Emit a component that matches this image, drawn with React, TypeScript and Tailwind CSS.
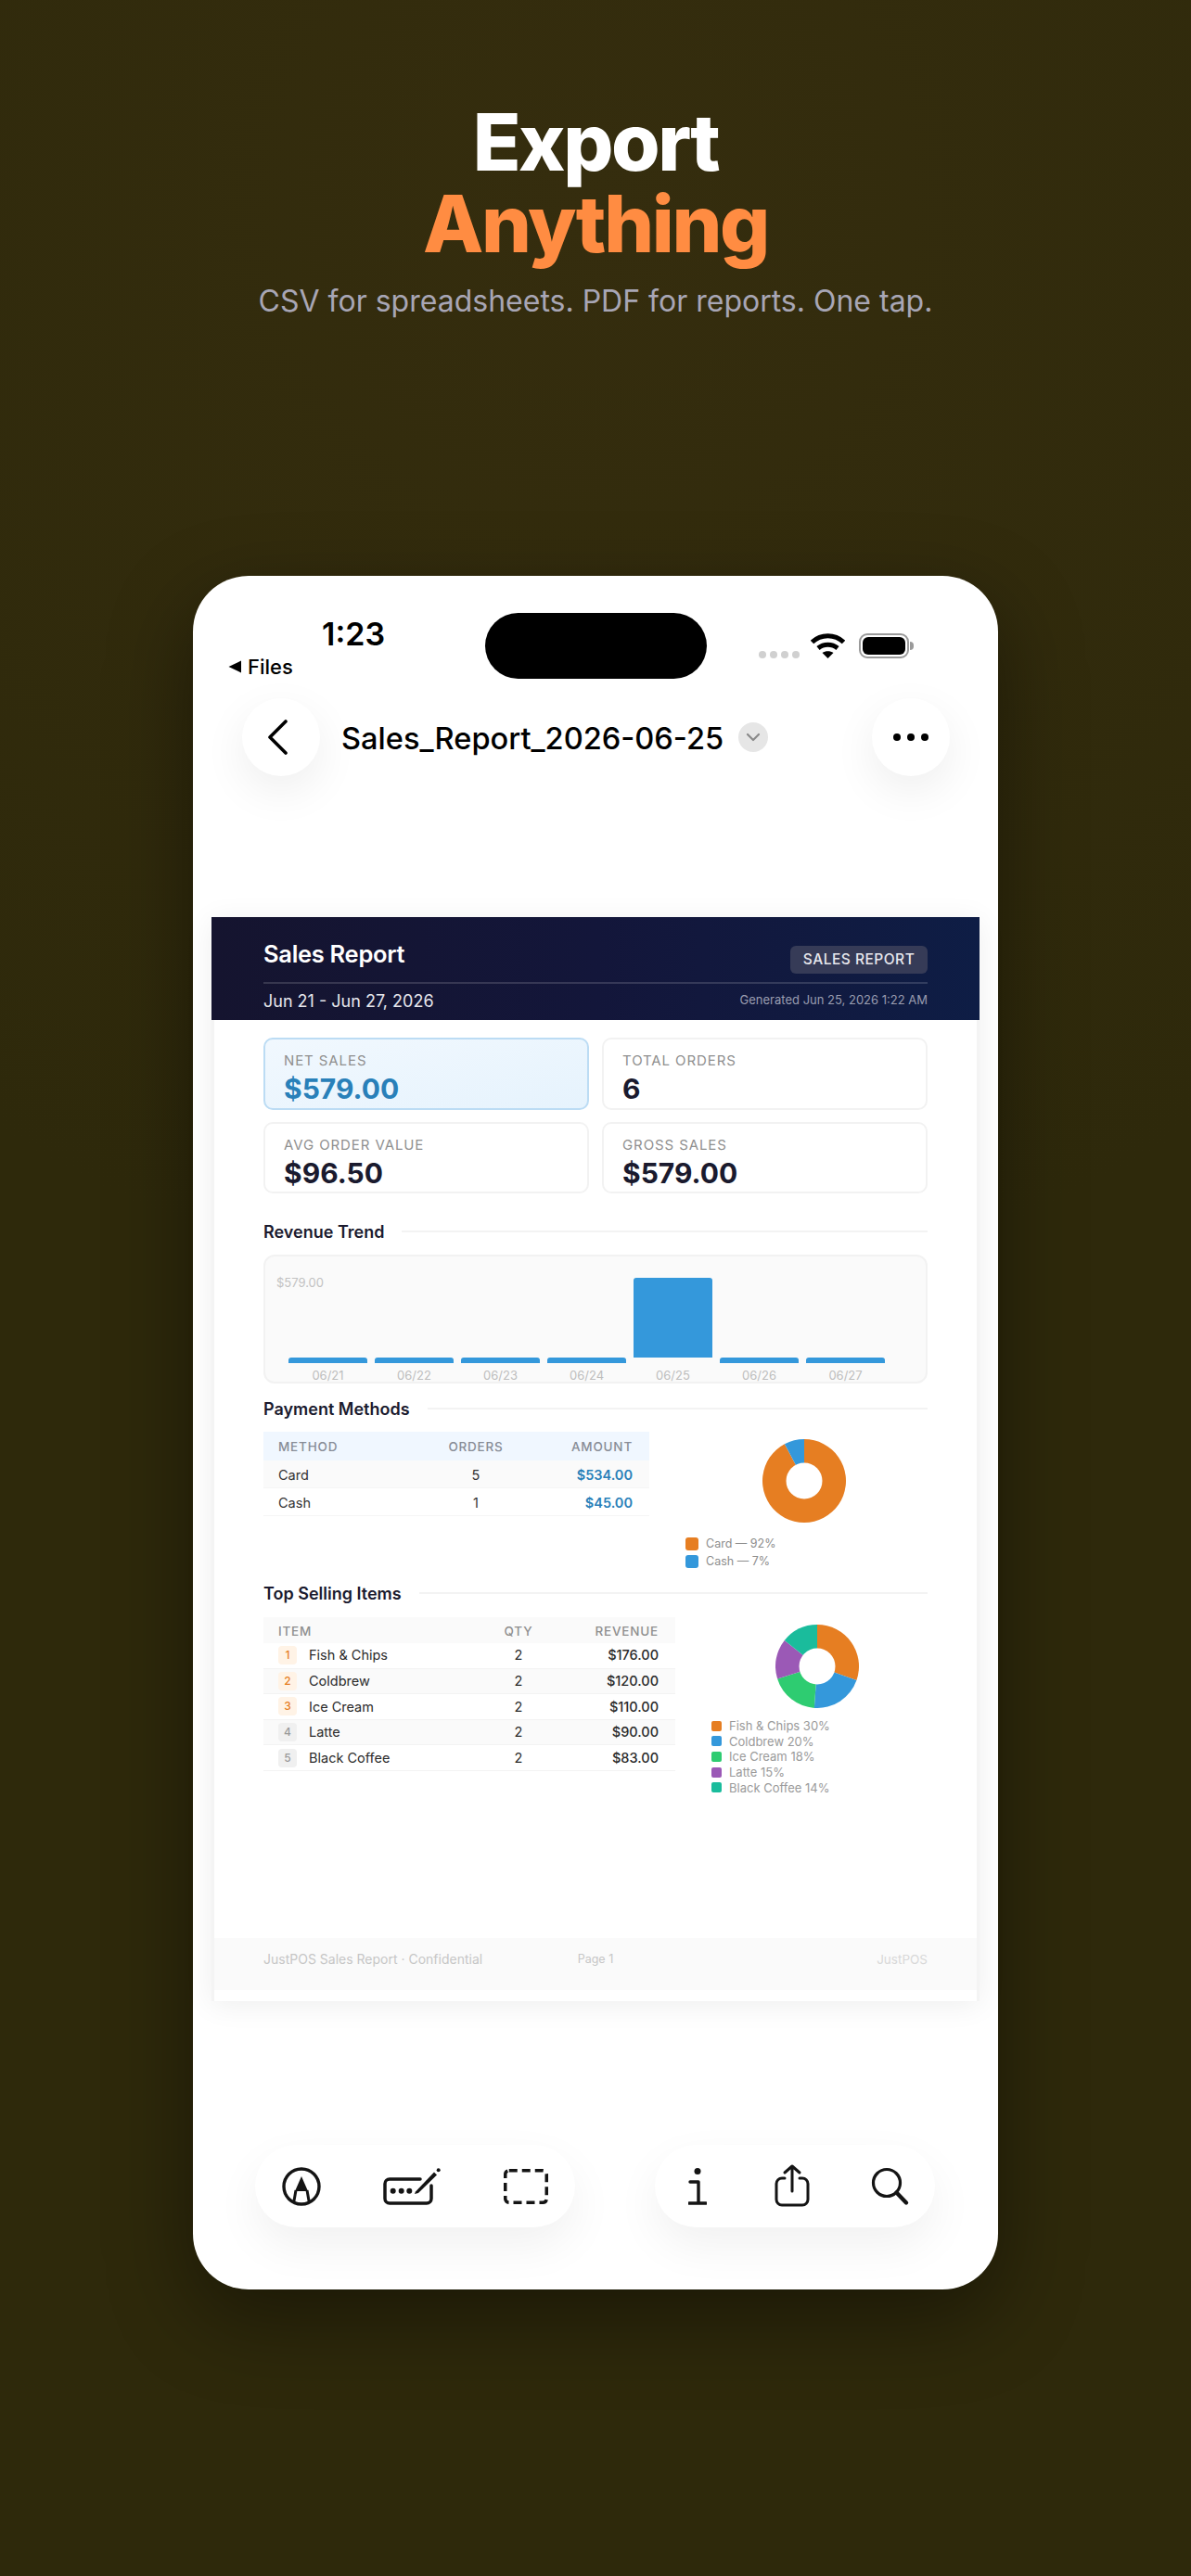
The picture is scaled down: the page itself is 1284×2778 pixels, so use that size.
import React from "react";

const trendDays = ["06/21", "06/22", "06/23", "06/24", "06/25", "06/26", "06/27"];

const paymentRows = [
  { method: "Card", orders: 5, amount: "$534.00" },
  { method: "Cash", orders: 1, amount: "$45.00" },
];

const topItems = [
  { name: "Fish & Chips", revenue: "$176.00" },
  { name: "Coldbrew", revenue: "$120.00" },
  { name: "Ice Cream", revenue: "$110.00" },
  { name: "Latte", revenue: "$90.00" },
  { name: "Black Coffee", revenue: "$83.00" },
];

const itemSlices = [
  { value: 176, color: "#E67E22" },
  { value: 120, color: "#3498DB" },
  { value: 110, color: "#2ECC71" },
  { value: 90, color: "#9B59B6" },
  { value: 83, color: "#1ABC9C" },
];

const paySlices = [
  { value: 534, color: "#E67E22" },
  { value: 45, color: "#3498DB" },
];

const Donut = ({ slices }: { slices: { value: number; color: string }[] }) => {
  const total = slices.reduce((sum, s) => sum + s.value, 0);
  let start = 0;
  return (
    <svg width="90" height="90" viewBox="0 0 90 90">
      {slices.map((s) => {
        const end = start + (s.value / total) * Math.PI * 2;
        const x1 = 45 + 45 * Math.sin(start);
        const y1 = 45 - 45 * Math.cos(start);
        const x2 = 45 + 45 * Math.sin(end);
        const y2 = 45 - 45 * Math.cos(end);
        const large = end - start > Math.PI ? 1 : 0;
        start = end;
        return (
          <path
            key={s.color}
            d={`M45 45 L${x1} ${y1} A45 45 0 ${large} 1 ${x2} ${y2} Z`}
            fill={s.color}
          />
        );
      })}
      <circle cx="45" cy="45" r="19.5" fill="#fff" />
    </svg>
  );
};

const SectionTitle = ({ title, className }: { title: string; className: string }) => (
  <div className={`flex items-center gap-[19px] h-[22px] ${className}`}>
    <h2 className="mt-[2px] text-[18px] leading-[22px] font-semibold text-[#1a1a2e]">{title}</h2>
    <div className="flex-1 h-[2px] bg-[#f3f3f3]" />
  </div>
);

const StatCard = ({ label, value, active }: { label: string; value: string; active?: boolean }) => (
  <div
    className={`rounded-[10px] border-2 pl-[20px] pt-[14px] ${
      active
        ? "border-[#bcdcf4] bg-gradient-to-br from-[#f1f8fe] to-[#e6f3fd]"
        : "border-[#f2f2f2] bg-white"
    }`}
  >
    <div className="text-[15px] leading-[18px] tracking-[0.9px] text-[#8f8f8f]">{label}</div>
    <div
      className={`mt-[2px] text-[30px] leading-[38px] font-bold ${
        active ? "text-[#2980b9]" : "text-[#1a1a2e]"
      }`}
    >
      {value}
    </div>
  </div>
);

export default function App() {
  return (
    <div className="w-[1284px] h-[2778px] overflow-hidden flex flex-col items-center bg-[#2e290b] bg-[radial-gradient(circle_at_50%_8%,#352d0e,#2e290b_45%)] font-['Inter',sans-serif]">
      {/* Headline */}
      <h1 className="mt-[110px] text-center text-[85px] leading-[88px] font-extrabold tracking-[-2.4px]">
        <span className="block text-white">Export</span>
        <span className="block text-[#ff8c42]">Anything</span>
      </h1>
      <p className="mt-[19px] text-[32px] leading-[40px] text-[#a8a6b5]">
        CSV for spreadsheets. PDF for reports. One tap.
      </p>

      {/* Phone */}
      <div className="mt-[276px] w-[868px] h-[1848px] rounded-[60px] bg-white shadow-[0_30px_90px_rgba(0,0,0,0.42)] flex flex-col">
        {/* Status bar */}
        <div className="relative h-[132px] shrink-0">
          <span className="absolute left-[139px] top-[41px] text-[34px] leading-[44px] font-semibold text-black">
            1:23
          </span>
          <div className="absolute left-[38px] top-[85px] flex items-center gap-[7px] text-[22px] leading-[26px] font-medium text-black">
            <svg width="14" height="14" viewBox="0 0 14 14">
              <path d="M14 0.5V13.5L0.5 7Z" fill="#000" />
            </svg>
            Files
          </div>
          <div className="absolute left-[315px] top-[40px] w-[239px] h-[71px] rounded-full bg-black" />
          <div className="absolute left-[610px] top-[81px] flex gap-[4px]">
            <i className="w-[8px] h-[8px] rounded-full bg-[#d0d0d0]" />
            <i className="w-[8px] h-[8px] rounded-full bg-[#d0d0d0]" />
            <i className="w-[8px] h-[8px] rounded-full bg-[#d0d0d0]" />
            <i className="w-[8px] h-[8px] rounded-full bg-[#d0d0d0]" />
          </div>
          <svg className="absolute left-[666px] top-[62px]" width="37" height="27" viewBox="0 0 37 27">
            <path d="M1.5 9.5 C11 0.5 26 0.5 35.5 9.5" fill="none" stroke="#000" strokeWidth="5" />
            <path d="M8 16 C14 11 23 11 29 16" fill="none" stroke="#000" strokeWidth="5" />
            <path d="M12.5 21 C16 18.5 21 18.5 24.5 21 L18.5 27Z" fill="#000" />
          </svg>
          <div className="absolute left-[718px] top-[62px] flex items-center gap-[1px]">
            <div className="w-[54px] h-[27px] rounded-[9px] border-[2.5px] border-[#9a9a9a] p-[2px]">
              <div className="w-full h-full rounded-[6px] bg-black" />
            </div>
            <div className="w-[4px] h-[9px] rounded-r-full bg-[#9a9a9a]" />
          </div>
        </div>

        {/* Nav row */}
        <div className="flex items-center h-[84px] pl-[53px] pr-[52px] shrink-0">
          <div className="w-[84px] h-[84px] rounded-full bg-white shadow-[0_16px_48px_rgba(0,0,0,0.07)] flex items-center justify-center">
            <svg className="-ml-[9px]" width="24" height="38" viewBox="0 0 24 38" fill="none">
              <path d="M21 2 L4 19 L21 36" stroke="#000" strokeWidth="3.6" strokeLinecap="round" strokeLinejoin="round" />
            </svg>
          </div>
          <span className="ml-[23px] mt-[2px] text-[32.6px] leading-[40px] font-medium text-black">
            Sales_Report_2026-06-25
          </span>
          <div className="ml-[16px] w-[32px] h-[32px] rounded-full bg-[#e6e6e6] flex items-center justify-center">
            <svg width="16" height="10" viewBox="0 0 16 10" fill="none">
              <path d="M2 2 L8 8 L14 2" stroke="#8a8a8a" strokeWidth="2.2" strokeLinecap="round" strokeLinejoin="round" />
            </svg>
          </div>
          <div className="ml-auto w-[84px] h-[84px] rounded-full bg-white shadow-[0_16px_48px_rgba(0,0,0,0.07)] flex items-center justify-center gap-[7px]">
            <i className="w-[8px] h-[8px] rounded-full bg-black" />
            <i className="w-[8px] h-[8px] rounded-full bg-black" />
            <i className="w-[8px] h-[8px] rounded-full bg-black" />
          </div>
        </div>

        {/* Report page */}
        <div className="mx-[20px] mt-[152px] h-[1169px] shrink-0 bg-white flex flex-col border-x-[3px] border-[#f4f4f4] shadow-[0_4px_30px_rgba(0,0,0,0.07)]">
          <div className="-mx-[3px] h-[111px] shrink-0 bg-gradient-to-r from-[#15142f] via-[#13163a] to-[#0e1d45] px-[56px] pt-[31px]">
            <div className="flex justify-between items-start h-[41px] border-b-2 border-white/15">
              <span className="-mt-[7px] text-[25.5px] leading-[32px] font-semibold text-white tracking-[-0.3px]">Sales Report</span>
              <span className="h-[30px] w-[148px] rounded-[6px] bg-[#363b57] text-center text-[15.5px] leading-[30px] font-medium tracking-[0.5px] text-[#e8e8ee]">
                SALES REPORT
              </span>
            </div>
            <div className="flex justify-between items-center h-[36px]">
              <span className="text-[18px] text-[#e6e6ec]">Jun 21 - Jun 27, 2026</span>
              <span className="text-[13px] text-[#9a9db0]">Generated Jun 25, 2026 1:22 AM</span>
            </div>
          </div>

          <div className="flex-1 px-[53px] flex flex-col">
            <div className="mt-[19px] grid grid-cols-2 grid-rows-[78px_77px] gap-x-[14px] gap-y-[13px]">
              <StatCard label="NET SALES" value="$579.00" active />
              <StatCard label="TOTAL ORDERS" value="6" />
              <StatCard label="AVG ORDER VALUE" value="$96.50" />
              <StatCard label="GROSS SALES" value="$579.00" />
            </div>

            <SectionTitle title="Revenue Trend" className="mt-[30px]" />
            <div className="relative mt-[14px] h-[139px] rounded-[12px] border-2 border-[#f2f2f2] bg-[#fafafa] pl-[25px] pt-[23px]">
              <span className="absolute left-[12px] top-[20px] text-[13px] leading-[16px] text-[#c2c2c2]">$579.00</span>
              <div className="flex gap-[8px]">
                {trendDays.map((day, i) => (
                  <div key={day} className="w-[85px] flex flex-col items-center">
                    <div className="h-[92px] w-full flex flex-col justify-end">
                      {i === 4 ? (
                        <div className="h-[86px] mb-[6px] rounded-t-[3px] bg-[#3498db]" />
                      ) : (
                        <div className="h-[6px] rounded-t-[3px] bg-[#3498db]" />
                      )}
                    </div>
                    <span className="mt-[5px] text-[13px] leading-[16px] text-[#bdbdbd]">{day}</span>
                  </div>
                ))}
              </div>
            </div>

            <SectionTitle title="Payment Methods" className="mt-[16px]" />
            <div className="mt-[14px] h-[163px] flex gap-[34px]">
              <div className="w-[416px] shrink-0">
                <div className="grid grid-cols-[176px_74px_1fr] items-center h-[31px] bg-[#f0f7ff] pl-[16px] pr-[18px] pt-[2px] text-[13.5px] font-medium tracking-[0.8px] text-[#878c96]">
                  <span>METHOD</span>
                  <span className="text-center">ORDERS</span>
                  <span className="text-right">AMOUNT</span>
                </div>
                {paymentRows.map((row, i) => (
                  <div
                    key={row.method}
                    className={`grid grid-cols-[176px_74px_1fr] items-center h-[30px] pl-[16px] pr-[18px] pt-[2px] text-[14.5px] text-[#333] border-b border-[#f5f5f5] ${
                      i === 0 ? "bg-[#fafafa]" : "bg-white"
                    }`}
                  >
                    <span>{row.method}</span>
                    <span className="text-center">{row.orders}</span>
                    <span className="text-right font-semibold text-[#2980b9]">{row.amount}</span>
                  </div>
                ))}
              </div>
              <div className="flex-1 flex flex-col items-center pt-[8px]">
                <Donut slices={paySlices} />
                <div className="self-start ml-[5px] mt-[16px] flex flex-col gap-[5px]">
                  <div className="flex items-center gap-[8px] h-[14px] text-[12.5px] text-[#8c8c8c]">
                    <i className="w-[14px] h-[14px] rounded-[3px] bg-[#e67e22]" />
                    Card — 92%
                  </div>
                  <div className="flex items-center gap-[8px] h-[14px] text-[12.5px] text-[#8c8c8c]">
                    <i className="w-[14px] h-[14px] rounded-[3px] bg-[#3498db]" />
                    Cash — 7%
                  </div>
                </div>
              </div>
            </div>

            <SectionTitle title="Top Selling Items" className="" />
            <div className="mt-[15px] flex gap-[34px]">
              <div className="w-[444px] shrink-0">
                <div className="grid grid-cols-[224px_70px_1fr] items-center h-[28px] bg-[#fafafa] pl-[16px] pr-[18px] pt-[2px] text-[13.5px] font-medium tracking-[0.8px] text-[#8f8f8f]">
                  <span>ITEM</span>
                  <span className="text-center">QTY</span>
                  <span className="text-right">REVENUE</span>
                </div>
                {topItems.map((item, i) => (
                  <div
                    key={item.name}
                    className={`grid grid-cols-[224px_70px_1fr] items-center h-[27.6px] pl-[16px] pr-[18px] text-[14.5px] text-[#2b2b2b] border-b border-[#f3f3f3] ${
                      i % 2 === 1 ? "bg-[#fafafa]" : "bg-white"
                    }`}
                  >
                    <span className="flex items-center gap-[13px]">
                      <span
                        className={`w-[20px] h-[20px] rounded-[4px] text-center text-[12px] leading-[20px] font-medium ${
                          i < 3 ? "bg-[#fff3e6] text-[#e67e22]" : "bg-[#f0f0f0] text-[#999]"
                        }`}
                      >
                        {i + 1}
                      </span>
                      {item.name}
                    </span>
                    <span className="text-center">2</span>
                    <span className="text-right font-medium">{item.revenue}</span>
                  </div>
                ))}
              </div>
              <div className="flex-1 flex flex-col items-center pt-[8px]">
                <Donut slices={itemSlices} />
                <div className="self-start ml-[5px] mt-[13px] flex flex-col gap-[4.7px] text-[13px] leading-[12px] text-[#9a9a9a]">
                  {[
                    ["Fish & Chips 30%", "bg-[#e67e22]"],
                    ["Coldbrew 20%", "bg-[#3498db]"],
                    ["Ice Cream 18%", "bg-[#2ecc71]"],
                    ["Latte 15%", "bg-[#9b59b6]"],
                    ["Black Coffee 14%", "bg-[#1abc9c]"],
                  ].map(([label, color]) => (
                    <div key={label} className="flex items-center gap-[8px]">
                      <i className={`w-[11px] h-[11px] rounded-[2px] ${color}`} />
                      {label}
                    </div>
                  ))}
                </div>
              </div>
            </div>
          </div>

          {/* Page footer */}
          <div className="mb-[12px] h-[56px] shrink-0 bg-[#fafafa] px-[53px] pt-[13px] grid grid-cols-3 text-[14px] leading-[20px] text-[#c6c6c6]">
            <span className="whitespace-nowrap">JustPOS Sales Report · Confidential</span>
            <span className="text-center text-[12.5px]">Page 1</span>
            <span className="text-right text-[13.5px] text-[#d8d8d8]">JustPOS</span>
          </div>
        </div>

        {/* Bottom toolbars */}
        <div className="mt-[155px] flex justify-between pl-[67px] pr-[68px]">
          <div className="w-[345px] h-[89px] rounded-full bg-white shadow-[0_20px_50px_rgba(0,0,0,0.06)] relative flex items-center">
            <svg className="ml-[29px]" width="42" height="42" viewBox="0 0 42 42" fill="none">
              <circle cx="21" cy="21" r="19" stroke="#141414" strokeWidth="3.4" />
              <path d="M15 25 L12.7 38 M27 25 L29.3 38" stroke="#141414" strokeWidth="3" />
              <path d="M21 10 L28 26 H14Z" fill="#141414" />
            </svg>
            <svg className="ml-[67px]" width="62" height="40" viewBox="0 0 62 40" fill="none">
              <path d="M40 12 H7 A5 5 0 0 0 2 17 V33 A5 5 0 0 0 7 38 H47 A5 5 0 0 0 52 33 V19" stroke="#141414" strokeWidth="3.5" strokeLinecap="round" />
              <circle cx="10.7" cy="24.7" r="3" fill="#141414" />
              <circle cx="19.7" cy="24.7" r="3" fill="#141414" />
              <circle cx="28.3" cy="24.7" r="3" fill="#141414" />
              <path d="M35 25.5 L55 4.5 L58 7.5 L38 27 L34 28Z" fill="#141414" />
              <circle cx="59.7" cy="2.2" r="2" fill="#141414" />
            </svg>
            <svg className="ml-[68px]" width="48" height="38" viewBox="0 0 48 38" fill="none">
              <rect x="1.75" y="1.75" width="44.5" height="34.5" rx="4" stroke="#141414" strokeWidth="3.5" strokeDasharray="9 5" />
            </svg>
          </div>
          <div className="w-[302px] h-[89px] rounded-full bg-white shadow-[0_20px_50px_rgba(0,0,0,0.06)] relative flex items-center">
            <svg className="ml-[36px]" width="20" height="40" viewBox="0 0 20 40" fill="none">
              <circle cx="10" cy="3.5" r="3.5" fill="#141414" />
              <path d="M2 15 H11 V38 M1 38 H19" stroke="#141414" strokeWidth="3.4" strokeLinecap="round" strokeLinejoin="round" />
            </svg>
            <svg className="ml-[73px] -mt-[2px]" width="38" height="46" viewBox="0 0 38 46" fill="none">
              <path d="M11 15 H8 A6 6 0 0 0 2 21 V38 A6 6 0 0 0 8 44 H30 A6 6 0 0 0 36 38 V21 A6 6 0 0 0 30 15 H27" stroke="#141414" strokeWidth="3" strokeLinecap="round" />
              <path d="M19 29 V2 M11 9 L19 2 L27 9" stroke="#141414" strokeWidth="3" strokeLinecap="round" strokeLinejoin="round" />
            </svg>
            <svg className="ml-[66px]" width="42" height="42" viewBox="0 0 42 42" fill="none">
              <circle cx="17" cy="17" r="14.5" stroke="#141414" strokeWidth="3.2" />
              <path d="M27.5 27.5 L38 38.5" stroke="#141414" strokeWidth="4.4" strokeLinecap="round" />
            </svg>
          </div>
        </div>
      </div>
    </div>
  );
}
